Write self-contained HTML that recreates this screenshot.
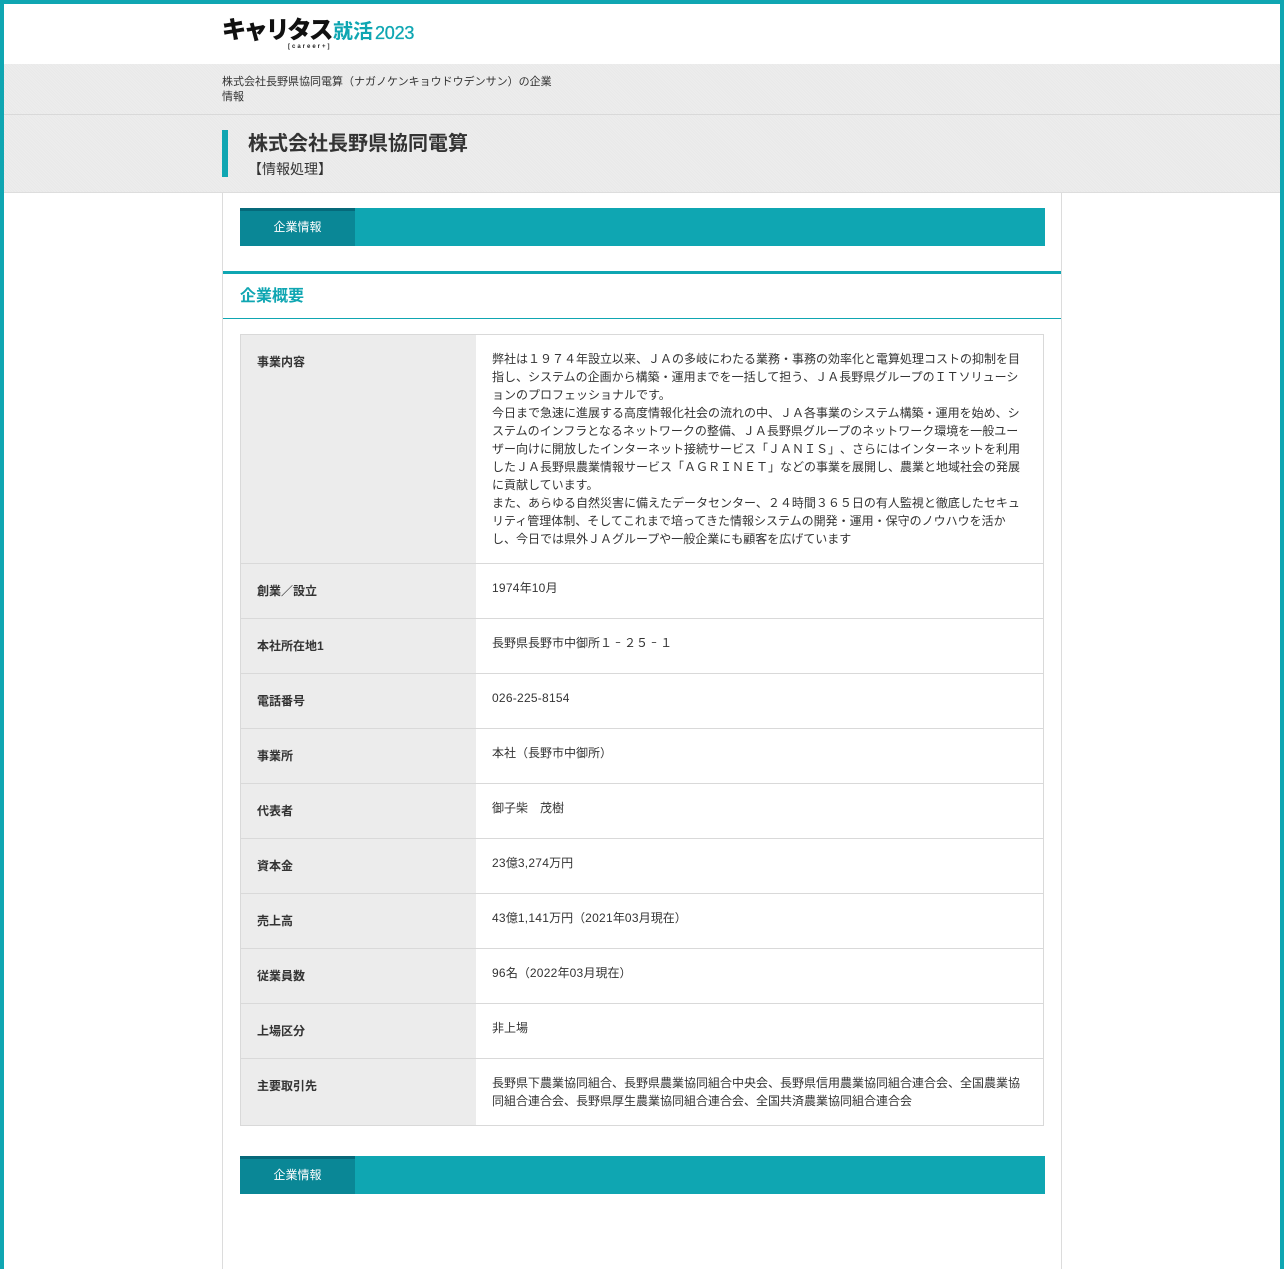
<!DOCTYPE html>
<html lang="ja" style="overflow:hidden;height:1269px"><head><meta charset="utf-8"><title>株式会社長野県協同電算</title>
<style>
*{box-sizing:border-box}
html,body{margin:0;padding:0}
body{width:1284px;height:1269px;overflow:hidden;position:relative;background:#fff;color:#333;font:12px/18px "Liberation Sans","Noto Sans CJK JP",sans-serif;text-spacing-trim:space-all}
.a{position:absolute}
.fr{position:absolute;background:#0fa6b2}
.n{letter-spacing:.25px}
.m{display:inline-block;transform:scaleX(.5)}
.bar{position:absolute;left:240px;width:805px;height:38px;background:#0fa6b2}
.tab{position:absolute;left:0;top:0;width:115px;height:38px;background:#0a8796;border-top:3px solid #06697a;color:#fff;text-align:center;line-height:33px}
table{position:absolute;left:240px;top:334px;width:804px;border-collapse:collapse;table-layout:fixed}
th,td{border:1px solid #d9d9d9;vertical-align:top;font-size:12px;line-height:18px}
th{width:235px;background:#ececec;text-align:left;font-weight:bold;padding:18px 16px 0;border-right:0}
td{padding:15px 22px 0 16.5px;border-left:0}
tr{height:55px}
</style></head><body>
<div class="a" style="left:4px;top:64px;width:1276px;height:129px;background:#ebebeb repeating-linear-gradient(45deg,#ededed 0 1px,#e9e9e9 1px 2px);border-bottom:1px solid #ddd"></div>
<div class="a" style="left:4px;top:114px;width:1276px;height:1px;background:#d9d9d9"></div>

<div class="a" style="left:222px;top:193px;width:840px;height:1076px;border-left:1px solid #dcdcdc;border-right:1px solid #dcdcdc"></div>
<div class="fr" style="left:0;top:0;width:1284px;height:4px"></div>
<div class="fr" style="left:0;top:0;width:4px;height:1269px"></div>
<div class="fr" style="left:1280px;top:0;width:4px;height:1269px"></div>

<div class="a" style="left:222px;top:16px;font-size:24px;line-height:30px;font-weight:bold;color:#111;white-space:nowrap;letter-spacing:-2.2px;-webkit-text-stroke:.8px #111">キャリタス</div>
<div class="a" style="left:333px;top:18px;font-size:20px;line-height:28px;font-weight:bold;color:#0fa6b2;white-space:nowrap">就活</div>
<div class="a" style="left:375px;top:22px;font-size:18px;line-height:22px;color:#0fa6b2;white-space:nowrap;letter-spacing:-.2px;-webkit-text-stroke:.3px #0fa6b2">2023</div>
<div class="a" style="left:288px;top:44px;font-size:6px;line-height:7px;font-weight:bold;color:#222;letter-spacing:2px;white-space:nowrap">[career+]</div>

<div class="a" style="left:222px;top:75px;width:340px;font-size:11px;line-height:15px">株式会社長野県協同電算（ナガノケンキョウドウデンサン）の企業情報</div>
<div class="fr" style="left:222px;top:130px;width:6px;height:47px"></div>
<div class="a" style="left:248px;top:131px;font-size:20px;line-height:26px;font-weight:bold;white-space:nowrap">株式会社長野県協同電算</div>
<div class="a" style="left:248px;top:160px;font-size:14px;line-height:18px;white-space:nowrap">【情報処理】</div>

<div class="bar" style="top:208px"><div class="tab">企業情報</div></div>
<div class="a" style="left:223px;top:271px;width:838px;height:48px;border-top:3px solid #0fa6b2;border-bottom:1px solid #0fa6b2;padding-left:17px;font-size:16px;line-height:45px;font-weight:bold;color:#0fa6b2">企業概要</div>

<table>
<tr style="height:229px"><th>事業内容</th><td>弊社は１９７４年設立以来、ＪＡの多岐にわたる業務・事務の効率化と電算処理コストの抑制を目指し、システムの企画から構築・運用までを一括して担う、ＪＡ長野県グループのＩＴソリューションのプロフェッショナルです。<br>今日まで急速に進展する高度情報化社会の流れの中、ＪＡ各事業のシステム構築・運用を始め、システムのインフラとなるネットワークの整備、ＪＡ長野県グループのネットワーク環境を一般ユーザー向けに開放したインターネット接続サービス「ＪＡＮＩＳ」、さらにはインターネットを利用したＪＡ長野県農業情報サービス「ＡＧＲＩＮＥＴ」などの事業を展開し、農業と地域社会の発展に貢献しています。<br>また、あらゆる自然災害に備えたデータセンター、２４時間３６５日の有人監視と徹底したセキュリティ管理体制、そしてこれまで培ってきた情報システムの開発・運用・保守のノウハウを活かし、今日では県外ＪＡグループや一般企業にも顧客を広げています</td></tr>
<tr><th>創業／設立</th><td><span class="n">1974</span>年<span class="n">10</span>月</td></tr>
<tr><th>本社所在地<span class="n">1</span></th><td>長野県長野市中御所１<span class="m">－</span>２５<span class="m">－</span>１</td></tr>
<tr><th>電話番号</th><td><span class="n">026-225-8154</span></td></tr>
<tr><th>事業所</th><td>本社（長野市中御所）</td></tr>
<tr><th>代表者</th><td>御子柴　茂樹</td></tr>
<tr><th>資本金</th><td><span class="n">23</span>億<span class="n">3,274</span>万円</td></tr>
<tr><th>売上高</th><td><span class="n">43</span>億<span class="n">1,141</span>万円（<span class="n">2021</span>年<span class="n">03</span>月現在）</td></tr>
<tr><th>従業員数</th><td><span class="n">96</span>名（<span class="n">2022</span>年<span class="n">03</span>月現在）</td></tr>
<tr><th>上場区分</th><td>非上場</td></tr>
<tr style="height:67px"><th>主要取引先</th><td>長野県下農業協同組合、長野県農業協同組合中央会、長野県信用農業協同組合連合会、全国農業協同組合連合会、長野県厚生農業協同組合連合会、全国共済農業協同組合連合会</td></tr>
</table>

<div class="bar" style="top:1156px"><div class="tab">企業情報</div></div>
</body></html>
